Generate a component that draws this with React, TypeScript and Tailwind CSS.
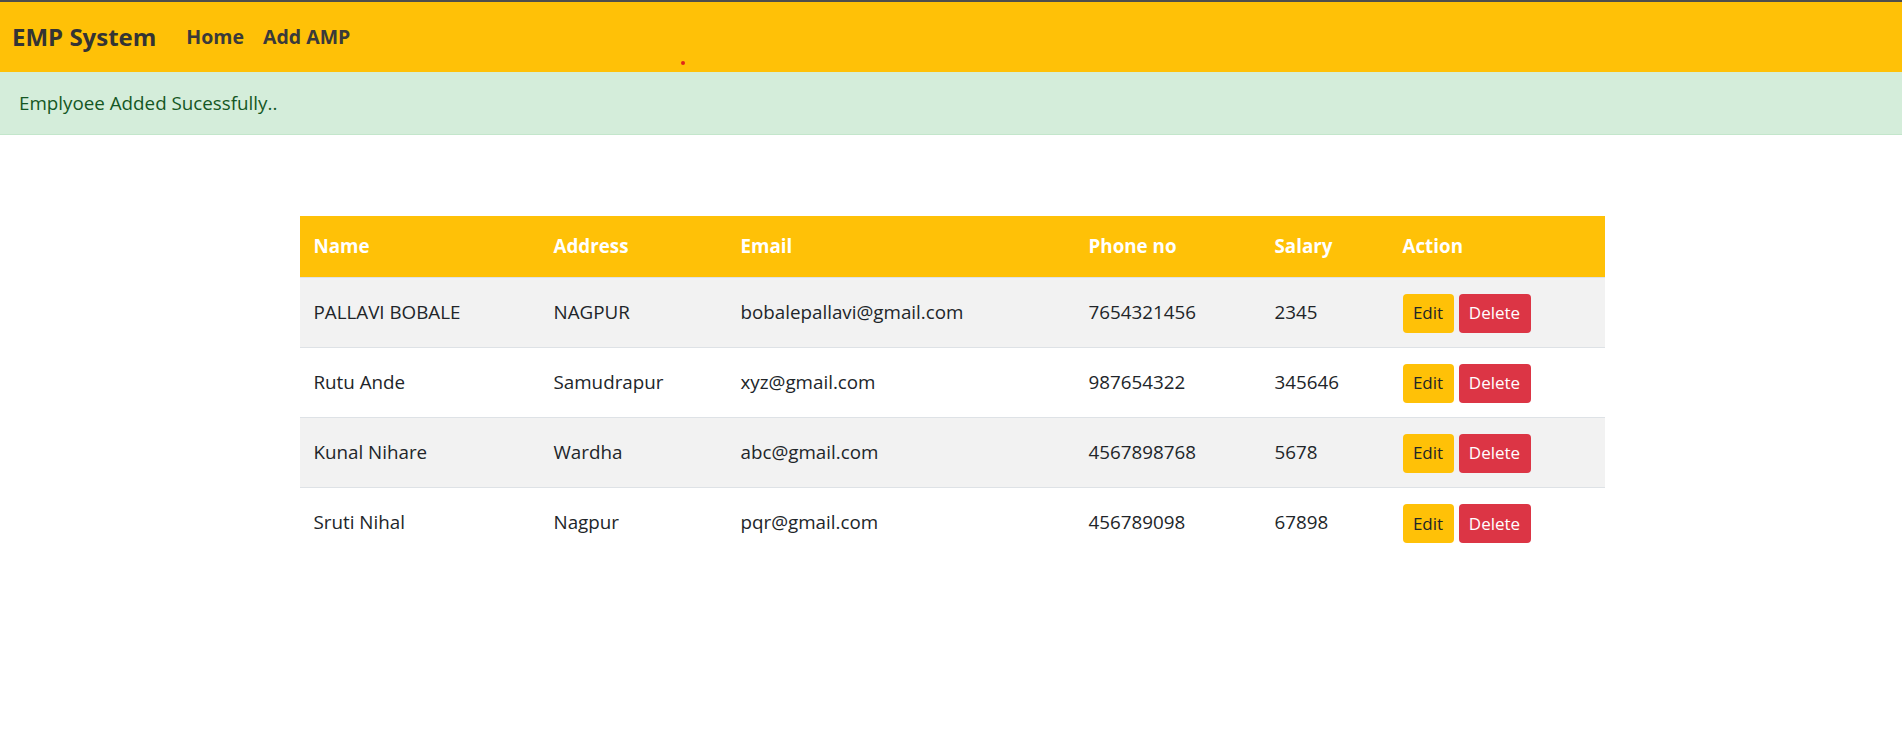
import React from 'react';

interface Employee {
  name: string;
  address: string;
  email: string;
  phone: string;
  salary: string;
}

const employees: Employee[] = [
  { name: 'PALLAVI BOBALE', address: 'NAGPUR', email: 'bobalepallavi@gmail.com', phone: '7654321456', salary: '2345' },
  { name: 'Rutu Ande', address: 'Samudrapur', email: 'xyz@gmail.com', phone: '987654322', salary: '345646' },
  { name: 'Kunal Nihare', address: 'Wardha', email: 'abc@gmail.com', phone: '4567898768', salary: '5678' },
  { name: 'Sruti Nihal', address: 'Nagpur', email: 'pqr@gmail.com', phone: '456789098', salary: '67898' },
];

const headers = [
  { label: 'Name', width: 'w-[240px]' },
  { label: 'Address', width: 'w-[187px]' },
  { label: 'Email', width: 'w-[348px]' },
  { label: 'Phone no', width: 'w-[186px]' },
  { label: 'Salary', width: 'w-[128px]' },
  { label: 'Action', width: 'w-[216px]' },
];

export default function App() {
  return (
    <div className="min-h-[743px] bg-white text-[#212529] font-['Open_Sans','Noto_Sans',sans-serif]">
      <nav className="relative flex h-[72px] items-center border-t-2 border-[#4d4d4d] bg-[#ffc107] px-3">
        <span className="text-[24px] font-bold text-[#343434]">EMP System</span>
        <div className="ml-[30px] flex gap-[19px] text-[19.5px] font-bold text-[#3a3a3a]">
          <a href="#">Home</a>
          <a href="#">Add AMP</a>
        </div>
        <span className="absolute left-[681px] top-[59px] h-[4px] w-[4px] rounded-full bg-[#e0261a]"></span>
      </nav>

      <div className="flex h-[63px] items-center border-b border-[#c3e6cb] bg-[#d4edda] px-[19px] text-[18.8px] text-[#155724]">
        Emplyoee Added Sucessfully..
      </div>

      <div className="flex justify-center pt-[81px] pl-[2px]">
        <table className="w-[1305px] table-fixed border-collapse text-[18.8px]">
          <thead>
            <tr className="h-[61px] bg-[#ffc107] text-white">
              {headers.map((h) => (
                <th key={h.label} className={`${h.width} px-[14px] text-left align-middle font-bold`}>
                  {h.label}
                </th>
              ))}
            </tr>
          </thead>
          <tbody>
            {employees.map((e, i) => (
              <tr
                key={e.email}
                className={`h-[70px] border-t border-[#dee2e6] ${i % 2 === 0 ? 'bg-[#f2f2f2]' : 'bg-white'}`}
              >
                <td className="px-[14px] align-middle">{e.name}</td>
                <td className="px-[14px] align-middle">{e.address}</td>
                <td className="px-[14px] align-middle">{e.email}</td>
                <td className="px-[14px] align-middle">{e.phone}</td>
                <td className="px-[14px] align-middle">{e.salary}</td>
                <td className="px-[14px] align-middle">
                  <div className="flex gap-[5px] pt-[2px]">
                    <button className="h-[39px] w-[51px] rounded-[4px] bg-[#ffc107] text-[17px] text-[#212529]">
                      Edit
                    </button>
                    <button className="h-[39px] w-[72px] rounded-[4px] bg-[#dc3545] text-[17px] text-white">
                      Delete
                    </button>
                  </div>
                </td>
              </tr>
            ))}
          </tbody>
        </table>
      </div>
    </div>
  );
}
